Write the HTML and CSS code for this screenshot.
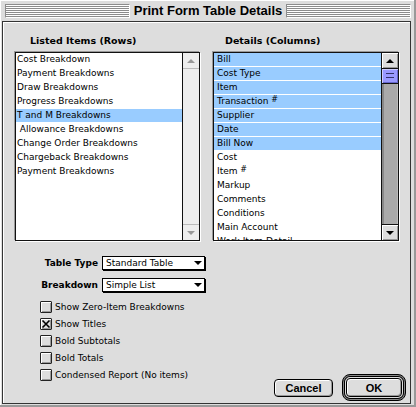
FILE: index.html
```html
<!DOCTYPE html>
<html lang="en">
<head>
    <meta charset="UTF-8">
    <meta name="viewport" content="width=device-width, initial-scale=1.0">
    <link rel="stylesheet" href="styles.css">
    <title>Print Form Table Details</title>
</head>
<body>
    <div class="window">
        <div class="titlebar">
            <span class="stripes"></span>
            <h1 class="title">Print Form Table Details</h1>
            <span class="stripes"></span>
        </div>
        <div class="panel">
            <div class="lists">
                <div class="group">
                    <h2 class="group-title">Listed Items (Rows)</h2>
                    <div class="listbox">
                        <ul class="items">
                            <li>Cost Breakdown</li>
                            <li>Payment Breakdowns</li>
                            <li>Draw Breakdowns</li>
                            <li>Progress Breakdowns</li>
                            <li class="selected">T and M Breakdowns</li>
                            <li>&nbsp;Allowance Breakdowns</li>
                            <li>Change Order Breakdowns</li>
                            <li>Chargeback Breakdowns</li>
                            <li>Payment Breakdowns</li>
                        </ul>
                        <div class="scrollbar disabled">
                            <span class="arrow up"></span>
                            <span class="track"></span>
                            <span class="arrow down"></span>
                        </div>
                    </div>
                </div>
                <div class="group">
                    <h2 class="group-title">Details (Columns)</h2>
                    <div class="listbox">
                        <ul class="items details">
                            <li class="selected">Bill</li>
                            <li class="selected">Cost Type</li>
                            <li class="selected">Item</li>
                            <li class="selected">Transaction <sup>#</sup></li>
                            <li class="selected">Supplier</li>
                            <li class="selected">Date</li>
                            <li class="selected">Bill Now</li>
                            <li>Cost</li>
                            <li>Item <sup>#</sup></li>
                            <li>Markup</li>
                            <li>Comments</li>
                            <li>Conditions</li>
                            <li>Main Account</li>
                            <li>Work Item Detail</li>
                        </ul>
                        <div class="scrollbar">
                            <span class="arrow up"></span>
                            <span class="thumb"></span>
                            <span class="track"></span>
                            <span class="arrow down"></span>
                        </div>
                    </div>
                </div>
            </div>

            <div class="bottom">
                <div class="options">
                    <div class="field">
                        <label class="field-label">Table Type</label>
                        <div class="popup"><span>Standard Table</span><i class="caret"></i></div>
                    </div>
                    <div class="field">
                        <label class="field-label">Breakdown</label>
                        <div class="popup"><span>Simple List</span><i class="caret"></i></div>
                    </div>
                    <ul class="checks">
                        <li><span class="checkbox"></span>Show Zero-Item Breakdowns</li>
                        <li>
                            <span class="checkbox checked">
                                <svg width="10" height="10" viewBox="0 0 10 10"><path d="M1.5 1.5 L8.5 8.5 M8.5 1.5 L1.5 8.5" stroke="#000" stroke-width="1.6"/></svg>
                            </span>Show Titles
                        </li>
                        <li><span class="checkbox"></span>Bold Subtotals</li>
                        <li><span class="checkbox"></span>Bold Totals</li>
                        <li><span class="checkbox"></span>Condensed Report (No items)</li>
                    </ul>
                </div>
                <div class="actions">
                    <button class="btn">Cancel</button>
                    <div class="default-ring"><button class="btn ok">OK</button></div>
                </div>
            </div>
        </div>
    </div>
</body>
</html>
```

FILE: styles.css
```css
* {
    box-sizing: border-box;
}

body {
    margin: 0;
    font-family: "DejaVu Sans", Verdana, sans-serif;
    font-size: 9px;
    color: #000;
    background-color: #ddd;
}

.window {
    width: 416px;
    height: 407px;
    display: flex;
    flex-direction: column;
    padding: 0 5px 3px 2px;
    background-color: #ddd;
    box-shadow: inset -2px -2px 0 #999, inset 1px 1px 0 #fff;
}

/* title bar */
.titlebar {
    height: 21px;
    display: flex;
    align-items: center;
    padding: 0 0 0 3px;
}

.stripes {
    flex: 1;
    height: 14px;
    background: repeating-linear-gradient(to bottom, #fff 0 1px, #8c8c8c 1px 2px);
    border-top: 1px solid #8c8c8c;
    border-left: 1px solid #8c8c8c;
    border-bottom: 1px solid #fff;
    border-right: 1px solid #fff;
}

.title {
    margin: 0 4px;
    font-family: "Liberation Sans", Arial, sans-serif;
    font-size: 13px;
    font-weight: bold;
    line-height: 21px;
}

/* main panel */
.panel {
    flex: 1;
    display: flex;
    flex-direction: column;
    border: 1px solid #333;
    padding: 13px 0 0 12px;
    box-shadow: inset 1px 1px 0 #fff;
}

.lists {
    display: grid;
    grid-template-columns: 185px 186px;
    column-gap: 13px;
}

.group-title {
    margin: 0 0 5px 15px;
    font-size: 9.5px;
    font-weight: bold;
    line-height: 12px;
}

.group + .group .group-title {
    margin-left: 12px;
}

.listbox {
    height: 189px;
    display: flex;
    border: 1px solid #111;
    background-color: #fff;
    box-shadow: -1px -1px 0 #999, 1px 1px 0 #fff;
    overflow: hidden;
}

.items {
    flex: 1;
    list-style: none;
    margin: 0;
    padding: 0;
    overflow: hidden;
}

.items li {
    height: 14px;
    line-height: 13px;
    padding-left: 1px;
    white-space: nowrap;
}

.details li {
    padding-left: 3px;
}

.items li.selected {
    background-color: #99ccff;
    box-shadow: inset 0 -1px 0 #fff;
}

.items sup {
    font-size: 8px;
    line-height: 0;
    vertical-align: 2px;
}

/* scroll bars */
.scrollbar {
    width: 17px;
    display: flex;
    flex-direction: column;
    border-left: 1px solid #111;
    background-color: #aaa;
}

.scrollbar .arrow {
    height: 15px;
    display: flex;
    align-items: center;
    justify-content: center;
    background-color: #ddd;
    box-shadow: inset 1px 1px 0 #fff, inset -1px -1px 0 #999;
}

.scrollbar .arrow.up {
    border-bottom: 1px solid #111;
    height: 16px;
}

.scrollbar .arrow.down {
    border-top: 1px solid #111;
    height: 16px;
}

.arrow::after {
    content: "";
    border-left: 4px solid transparent;
    border-right: 4px solid transparent;
}

.arrow.up::after {
    border-bottom: 4px solid #000;
}

.arrow.down::after {
    border-top: 4px solid #000;
}

.scrollbar .track {
    flex: 1;
    box-shadow: inset 2px 0 0 #888, inset -1px 0 0 #bbb;
}

.scrollbar .thumb {
    height: 15px;
    border-bottom: 1px solid #111;
    background: repeating-linear-gradient(to bottom, transparent 0 3px, #33336a 3px 4px) 4px 1px / 8px 11px no-repeat,
        #9999ff;
    box-shadow: inset 1px 1px 0 #ccccff, inset -1px -1px 0 #6666cc;
}

.scrollbar.disabled {
    background-color: #eee;
}

.scrollbar.disabled .arrow {
    background-color: #eee;
    box-shadow: none;
    border-color: #bbb;
}

.scrollbar.disabled .arrow.up::after {
    border-bottom-color: #999;
}

.scrollbar.disabled .arrow.down::after {
    border-top-color: #999;
}

.scrollbar.disabled .track {
    box-shadow: none;
}

/* lower half */
.bottom {
    flex: 1;
    display: flex;
    justify-content: space-between;
    margin-top: 15px;
}

.field {
    display: flex;
    align-items: center;
    margin-bottom: 8px;
    margin-left: -12px;
}

.field:last-of-type {
    margin-bottom: 0;
}

.field-label {
    width: 95px;
    margin-right: 4px;
    text-align: right;
    font-weight: bold;
}

.popup {
    width: 103px;
    height: 14px;
    display: flex;
    align-items: center;
    justify-content: space-between;
    padding: 0 2px 0 3px;
    border: 1px solid #000;
    background-color: #fff;
    box-shadow: 1px 1px 0 #000;
}

.caret {
    border-left: 4px solid transparent;
    border-right: 4px solid transparent;
    border-top: 4px solid #000;
}

.checks {
    list-style: none;
    margin: 6px 0 0 25px;
    padding: 0;
}

.checks li {
    height: 17px;
    display: flex;
    align-items: center;
}

.checkbox {
    width: 12px;
    height: 12px;
    display: flex;
    align-items: center;
    justify-content: center;
    margin-right: 3px;
    border: 1px solid #222;
    border-radius: 1px;
    background-color: #ddd;
    box-shadow: inset 1px 1px 0 #fff, inset -1px -1px 0 #999;
}

/* buttons */
.actions {
    align-self: flex-end;
    display: flex;
    align-items: center;
    gap: 9px;
    padding: 0 4px 2px 0;
}

.btn {
    height: 18px;
    width: 59px;
    padding: 0;
    font-family: "Liberation Sans", Arial, sans-serif;
    font-size: 11px;
    font-weight: bold;
    color: #000;
    border: 1px solid #000;
    border-radius: 4px;
    background-color: #ddd;
    box-shadow: inset 1px 1px 0 #fff, inset -1px -1px 0 #999;
}

.btn.ok {
    width: 56px;
    height: 19px;
}

.default-ring {
    display: flex;
    padding: 3px;
    border: 1px solid #000;
    border-radius: 8px;
    background-color: #ddd;
    box-shadow: inset 0 0 0 1px #888, inset 0 0 0 2px #000;
}
```
